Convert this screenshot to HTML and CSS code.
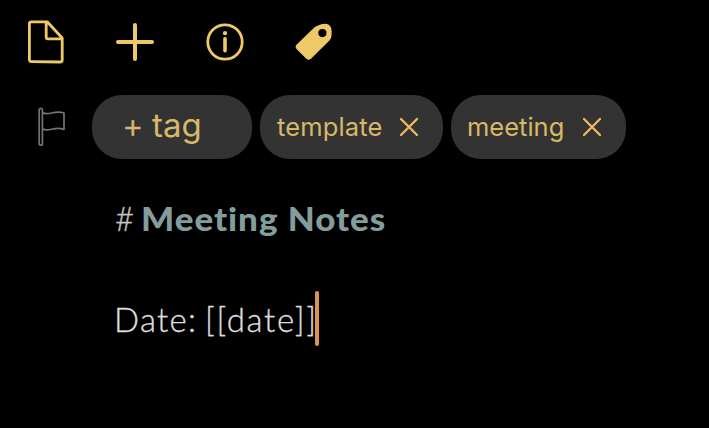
FILE: index.html
```html
<!DOCTYPE html>
<html lang="en">
<head>
<meta charset="utf-8">
<title>Meeting Notes</title>
<link rel="stylesheet" href="styles.css">
</head>
<body>
<nav class="toolbar">
  <svg class="icon" viewBox="0 0 48 48"><path d="M8.2 3.8H24L39 20V42q0 2-2 2L8.2 43.6q-2 0-2-2V5.8q0-2 2-2ZM23 4.5V19q0 1.8 1.8 1.8H38.5" transform="translate(2.2 0)"/></svg>
  <svg class="icon" viewBox="0 0 48 48"><path class="plus" d="M24 7V41M7 24H41"/></svg>
  <svg class="icon" viewBox="0 0 48 48"><circle class="ring" cx="24" cy="24" r="17.2"/><circle class="solid" cx="24" cy="15.2" r="2.1"/><path class="stem" d="M24 20.8V32.7"/></svg>
  <svg class="icon" viewBox="0 0 48 48"><path class="solid" fill-rule="evenodd" transform="translate(-1 0)" d="M28 7.4Q31 5.8 35 5.8C39 5.8 41.6 8.6 41.6 13V17Q41.6 20 39.5 22.4L21 40.8Q18.5 43 16 40.5L6.7 31.2Q4.5 29 6.7 26.5L23.5 10.2Q25.6 8.2 28 7.4ZM32.4 11A4.1 4.1 0 1 0 32.4 19.2A4.1 4.1 0 1 0 32.4 11Z"/></svg>
</nav>
<div class="tags">
  <svg class="flag" viewBox="0 0 32 42"><path d="M3.2 4Q3.2 2.4 4.8 2.4T6.4 4V37.5Q6.4 39.2 4.8 39.2T3.2 37.5ZM6.4 6.6C13 10.5 18 3.5 28 7V23.5C18 19.5 13 27 6.4 22.8"/></svg>
  <div class="tag add"><span class="sign">+</span><span>tag</span></div>
  <div class="tag template"><span class="name">template</span><svg class="close" viewBox="0 0 20 20"><path d="M2 2L18 18M18 2L2 18"/></svg></div>
  <div class="tag meeting"><span class="name">meeting</span><svg class="close" viewBox="0 0 20 20"><path d="M2 2L18 18M18 2L2 18"/></svg></div>
</div>
<main class="editor">
  <h1 class="line heading"><span class="hash">#</span><span class="title">Meeting Notes</span></h1>
  <p class="line date"><span class="label">Date:</span><span class="field">[[date]]</span><i class="caret"></i></p>
</main>
</body>
</html>
```

FILE: styles.css
```css
* { box-sizing: border-box; }
body { margin: 0; height: 428px; background: #000; overflow: hidden; font-family: Inter, sans-serif; }
svg { display: block; flex: none; fill: none; stroke: #edc967; stroke-linecap: round; stroke-linejoin: round; }
.toolbar { display: flex; height: 95px; padding: 18px 0 0 21px; gap: 42px; }
.icon { width: 48px; height: 48px; stroke-width: 2.8; }
.plus { stroke-width: 4; }
.ring { stroke-width: 2.8; }
.stem { stroke-width: 3.6; }
.solid { fill: #edc967; stroke: none; }
.tags { display: flex; height: 64px; gap: 8px; padding-left: 36px; }
.flag { width: 32px; height: 42px; margin: 11px 16px 0 0; stroke: #747474; stroke-width: 1.7; }
.tag { display: flex; align-items: center; height: 64px; border-radius: 30px; background: #333; color: #d8b869; font-size: 25.5px; white-space: nowrap; }
.add { width: 160px; padding: 0 0 4px 30px; font-size: 33px; }
.sign { width: 30px; font-size: 33px; font-weight: 300; -webkit-text-stroke: .5px; }
.name { padding-bottom: 2px; }
.template { width: 183px; padding-left: 17px; }
.template .name { width: 122px; letter-spacing: .15px; }
.meeting { width: 175px; padding-left: 16px; }
.meeting .name { width: 115px; }
.close { width: 20px; height: 20px; stroke: #f0b964; stroke-width: 2.3; }
.editor { padding: 31px 0 0 115px; font-family: Lato, sans-serif; font-variant-ligatures: none; }
.line { display: flex; align-items: center; margin: 0; height: 56px; font-size: 33px; white-space: nowrap; }
.hash { width: 26px; font-weight: 300; color: #c5c5c5; -webkit-text-stroke: .3px; }
.title { color: #839d9c; font-weight: 900; transform: scaleX(1.06); transform-origin: left; letter-spacing: .9px; }
.date { margin-top: 44px; color: #dedede; font-weight: 300; -webkit-text-stroke: .35px; }
.label { width: 91px; margin-left: -1px; padding-top: 2px; letter-spacing: 1.3px; }
.field { width: 110px; padding-top: 2px; letter-spacing: 1.65px; }
.caret { width: 4px; height: 55px; border-radius: 2px; background: #dc9452; }
```
